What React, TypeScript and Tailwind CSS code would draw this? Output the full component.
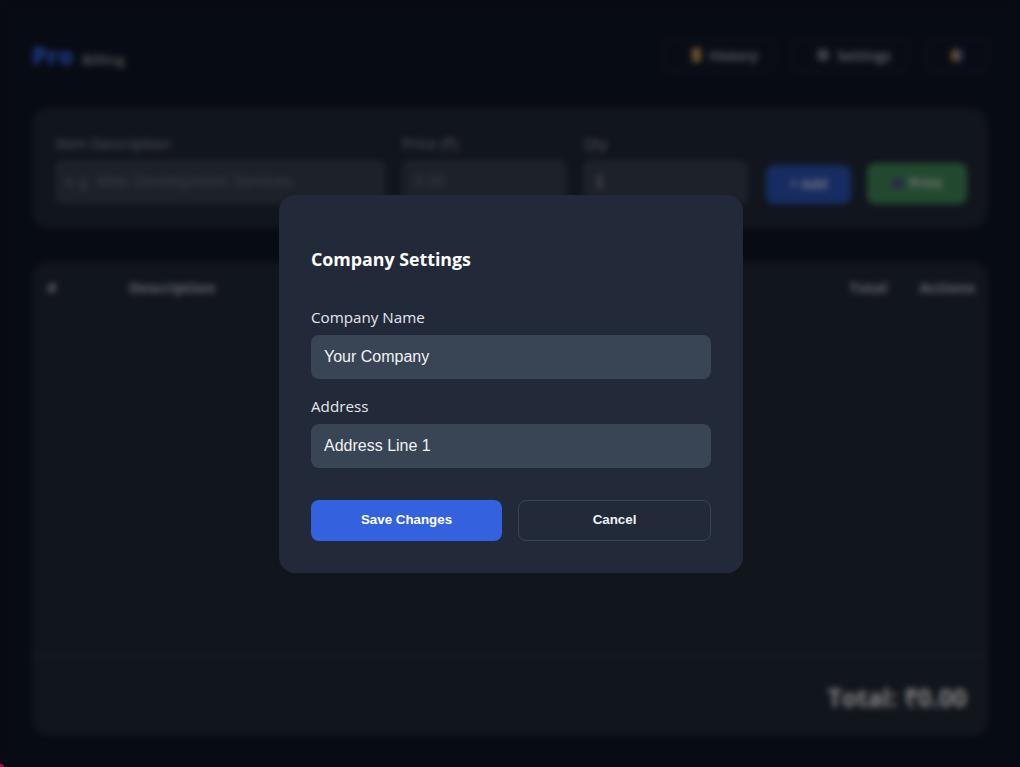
const uiFont = "font-['Open_Sans',sans-serif]"
const fieldFont = "font-['Liberation_Sans',Arial,sans-serif]"

function BackgroundPage() {
  return (
    <div className={`flex flex-col h-[767px] bg-[#0f1626] px-8 pt-[37px] pb-[31px] ${uiFont}`}>
      {/* Header */}
      <div className="flex items-start justify-between h-[71px]">
        <div className="flex items-baseline gap-2 pt-[4px]">
          <span className="text-2xl font-extrabold text-[#3a68f5] leading-[30px]">Pro</span>
          <span className="text-[14.5px] font-semibold text-[#a4a9b2]">Billing</span>
        </div>
        <div className="flex gap-[14px] h-[36px] mr-[-2px]">
          <div className="flex items-center justify-center gap-[8px] w-[114px] pl-[12px] rounded-lg border border-[#242c3c] bg-[#121929] text-[14px] font-semibold text-[#c4c9d2]">
            <span className="w-[9px] h-[14px] bg-[#d6a85c] rounded-[1px]" />
            History
          </div>
          <div className="flex items-center justify-center gap-[8px] w-[120px] pl-[8px] rounded-lg border border-[#242c3c] bg-[#121929] text-[14px] font-semibold text-[#c4c9d2]">
            <span className="w-[12px] h-[12px] rounded-full border-[2px] border-[#9ca3af] bg-[#6b7280]" />
            Settings
          </div>
          <div className="flex items-center justify-center w-[66px] rounded-lg border border-[#242c3c] bg-[#121929]">
            <span className="w-[12px] h-[13px] rounded-full bg-[linear-gradient(90deg,#e6b34a_50%,#7a6bd0_50%)]" />
          </div>
        </div>
      </div>

      {/* Add item form */}
      <div className="flex items-end gap-4 h-[120px] rounded-2xl bg-[#222a39] pl-[23px] pr-[21px] pb-[24px]">
        <div className="flex flex-col w-[331px]">
          <span className="text-[15px] text-[#a7adb8] mb-[6px]">Item Description</span>
          <div className={`flex items-center h-[44px] rounded-lg bg-[#3a4252] pl-[10px] text-base text-[#6f7787] ${fieldFont}`}>e.g. Web Development Services</div>
        </div>
        <div className="flex flex-col w-[165px]">
          <span className="text-[15px] text-[#a7adb8] mb-[6px]">Price (₹)</span>
          <div className={`flex items-center h-[44px] rounded-lg bg-[#3a4252] px-3 text-base text-[#6f7787] ${fieldFont}`}>0.00</div>
        </div>
        <div className="flex flex-col w-[165px]">
          <span className="text-[15px] text-[#a7adb8] mb-[6px]">Qty</span>
          <div className={`flex items-center h-[44px] rounded-lg bg-[#3a4252] px-3 text-base text-[#c4c9d2] ${fieldFont}`}>1</div>
        </div>
        <div className="flex items-center justify-center w-[85px] h-[39px] ml-[2px] rounded-lg bg-[#2f58c4] text-[13.33px] font-bold text-[#dfe5f5]">+ Add</div>
        <div className="flex items-center justify-center gap-[6px] w-[100px] h-[41px] rounded-lg bg-[#45935f] text-[13.33px] font-bold text-[#dfe9e3]">
          <span className="w-[11px] h-[9px] rounded-[2px] bg-[#5b4a9c]" />
          Print
        </div>
      </div>

      {/* Items table */}
      <div className="flex flex-col flex-1 mt-[34px] rounded-2xl bg-[#222a39]">
        <div className="flex items-center justify-between h-[51px] pl-[15px] pr-[13px] text-[15px] font-bold text-[#c4c9d2]">
          <div className="flex">
            <span className="w-[82px]">#</span>
            <span>Description</span>
          </div>
          <div className="flex gap-8">
            <span>Total</span>
            <span>Actions</span>
          </div>
        </div>
        <div className="flex-1" />
        <div className="flex items-center justify-end h-[81px] pt-[3px] border-t border-[#414a5b] pr-[21px] text-[24.7px] font-bold text-white">
          Total: ₹0.00
        </div>
      </div>
    </div>
  )
}

export default function App() {
  return (
    <div className="relative h-[767px] overflow-hidden">
      <BackgroundPage />

      {/* Modal overlay */}
      <div className="absolute inset-0 flex items-center justify-center pl-[2px] bg-black/50 backdrop-blur-[3px]">
        <div className={`w-[464px] h-[378px] rounded-2xl bg-[#222a3a] p-8 ${uiFont}`}>
          <h2 className="text-[17.8px] font-bold text-white leading-[24px] mt-[20px] mb-[36px]">Company Settings</h2>

          <div className="mb-[17px]">
            <label className="block text-[15.2px] text-[#e5e7eb] leading-[20px] mb-2">Company Name</label>
            <input
              readOnly
              value="Your Company"
              className={`block w-full h-[44px] rounded-lg bg-[#394455] px-[13px] text-base text-[#f1f3f6] outline-none ${fieldFont}`}
            />
          </div>

          <div className="mb-8">
            <label className="block text-[15.2px] text-[#e5e7eb] leading-[20px] mb-2">Address</label>
            <input
              readOnly
              value="Address Line 1"
              className={`block w-full h-[44px] rounded-lg bg-[#394455] px-[13px] text-base text-[#f1f3f6] outline-none ${fieldFont}`}
            />
          </div>

          <div className={`flex gap-4 ${fieldFont}`}>
            <button className="w-[191px] h-[41px] rounded-lg bg-[#3462de] text-[13.33px] font-bold text-white">Save Changes</button>
            <button className="flex-1 h-[41px] rounded-lg border border-[#394354] text-[13.33px] font-bold text-[#f1f3f6]">Cancel</button>
          </div>
        </div>
      </div>

      {/* Something peeking in at the bottom left corner */}
      <div className="absolute left-0 bottom-0 w-[4px] h-[3px] rounded-tr-sm bg-[#a01040]" />
    </div>
  )
}
